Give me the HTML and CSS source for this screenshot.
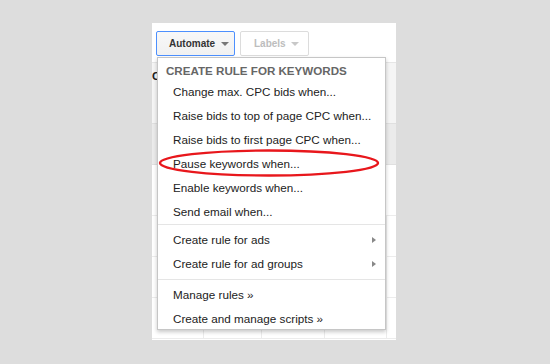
FILE: index.html
```html
<!DOCTYPE html>
<html>
<head>
    <title>Automate</title>
    <link rel="stylesheet" href="styles.css">
</head>
<body>
    <div class="panel">
        <div class="toolbar">
            <div class="btn btnActive">Automate <span class="caret"></span></div>
            <div class="btn btnOff">Labels <span class="caret"></span></div>
        </div>
        <div class="table">
            <div class="headRow"><span class="colHead">C</span></div>
            <div class="shadeRow"></div>
            <div class="row"></div>
            <div class="row cols"></div>
            <div class="row cols"></div>
            <div class="row cols"></div>
        </div>

        <div class="menu">
            <div class="menuHead">CREATE RULE FOR KEYWORDS</div>
            <div class="menuItem">Change max. CPC bids when...</div>
            <div class="menuItem">Raise bids to top of page CPC when...</div>
            <div class="menuItem">Raise bids to first page CPC when...</div>
            <div class="menuItem">Pause keywords when...</div>
            <div class="menuItem">Enable keywords when...</div>
            <div class="menuItem">Send email when...</div>
            <div class="sep"></div>
            <div class="menuItem sub">Create rule for ads</div>
            <div class="menuItem sub">Create rule for ad groups</div>
            <div class="sep sepMid"></div>
            <div class="menuItem">Manage rules &raquo;</div>
            <div class="menuItem">Create and manage scripts &raquo;</div>
        </div>

        <svg class="circle" width="224" height="32" viewBox="0 0 224 32">
            <ellipse cx="112" cy="16" rx="109" ry="12.5" fill="none" stroke="#e8171c" stroke-width="2.4"/>
        </svg>
    </div>
</body>
</html>
```
FILE: styles.css
```css
body {
    margin: 0;
    background-color: #dddddd;
    font-family: Arial, "Liberation Sans", sans-serif;
}

.panel {
    position: relative;
    margin: 23px 0 0 152px;
    width: 244px;
    height: 317px;
    background-color: #fff;
    overflow: hidden;
}

.toolbar {
    display: flex;
    gap: 5px;
    padding: 8px 0 0 4px;
    height: 31px;
}

.btn {
    box-sizing: border-box;
    height: 25px;
    padding: 0 0 0 12px;
    border: 1px solid #dcdcdc;
    border-radius: 2px;
    font-size: 10px;
    font-weight: bold;
    line-height: 23px;
    white-space: nowrap;
}

.btnActive {
    width: 79px;
    border-color: #4d90fe;
    background: linear-gradient(#f8f8f8, #f1f1f1);
    color: #333;
}

.btnOff {
    width: 69px;
    padding-left: 13px;
    color: #bdbdbd;
    background-color: #fff;
}

.caret {
    display: inline-block;
    margin-left: 3px;
    vertical-align: middle;
    border-left: 4px solid transparent;
    border-right: 4px solid transparent;
    border-top: 4px solid #777;
}

.btnOff .caret {
    border-top-color: #c8c8c8;
}

.table {
    border-top: 1px solid #e6e6e6;
}

.headRow {
    height: 60px;
    background-color: #f5f5f5;
    border-bottom: 1px solid #e0e0e0;
}

.colHead {
    display: block;
    padding-top: 7px;
    font-size: 11.5px;
    font-weight: bold;
    color: #222;
}

.shadeRow {
    height: 40px;
    background-color: #ebebeb;
    border-bottom: 1px solid #e0e0e0;
}

.row {
    height: 50px;
    border-bottom: 1px solid #ececec;
}

.cols {
    height: 40px;
    background: linear-gradient(90deg, transparent 51px, #ececec 51px, #ececec 52px, transparent 52px,
        transparent 109px, #ececec 109px, #ececec 110px, transparent 110px,
        transparent 172px, #ececec 172px, #ececec 173px, transparent 173px,
        transparent 234px, #ececec 234px, #ececec 235px, transparent 235px);
}

.menu {
    position: absolute;
    top: 34px;
    left: 5px;
    width: 229px;
    height: 273px;
    padding-top: 4px;
    box-sizing: border-box;
    border: 1px solid #c6c6c6;
    background-color: #fff;
    box-shadow: 0 2px 4px rgba(0, 0, 0, .22);
    color: #222;
    font-size: 11.7px;
}

.menuHead {
    height: 18px;
    line-height: 18px;
    padding-left: 8px;
    font-weight: bold;
    font-size: 11.6px;
    color: #666;
}

.menuItem {
    position: relative;
    height: 24px;
    line-height: 24px;
    padding-left: 15px;
    white-space: nowrap;
}

.sub::after {
    content: "";
    position: absolute;
    right: 9px;
    top: 9px;
    border-top: 3px solid transparent;
    border-bottom: 3px solid transparent;
    border-left: 4px solid #888;
}

.sep {
    margin: 0 0 3px;
    border-top: 1px solid #e5e5e5;
}

.sepMid {
    margin-top: 3px;
}

.circle {
    position: absolute;
    left: 5px;
    top: 124px;
}
```
